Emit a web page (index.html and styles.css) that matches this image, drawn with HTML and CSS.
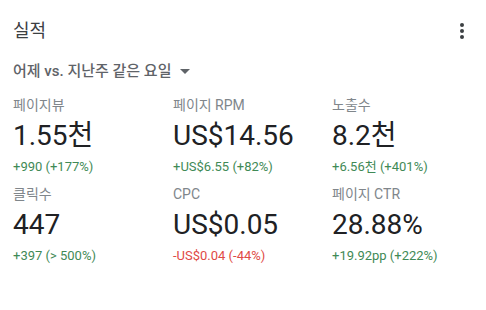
FILE: index.html
```html
<!DOCTYPE html>
<html lang="ko">
<head>
<meta charset="utf-8">
<link rel="stylesheet" href="styles.css">
</head>
<body>
<div class="card">
  <div class="header">
    <h1 class="title">실적</h1>
    <button class="more" aria-label="더보기">
      <svg width="4" height="16" viewBox="0 0 4 16"><circle cx="2" cy="2" r="2"/><circle cx="2" cy="8" r="2"/><circle cx="2" cy="14" r="2"/></svg>
    </button>
  </div>
  <div class="range">어제 vs. 지난주 같은 요일 <span class="caret"></span></div>
  <div class="grid">
    <div class="metric">
      <div class="label">페이지뷰</div>
      <div class="value">1.55천</div>
      <div class="delta up">+990 (+177%)</div>
    </div>
    <div class="metric">
      <div class="label">페이지 RPM</div>
      <div class="value">US$14.56</div>
      <div class="delta up">+US$6.55 (+82%)</div>
    </div>
    <div class="metric">
      <div class="label">노출수</div>
      <div class="value">8.2천</div>
      <div class="delta up">+6.56천 (+401%)</div>
    </div>
    <div class="metric">
      <div class="label">클릭수</div>
      <div class="value">447</div>
      <div class="delta up">+397 (&gt; 500%)</div>
    </div>
    <div class="metric">
      <div class="label">CPC</div>
      <div class="value">US$0.05</div>
      <div class="delta down">-US$0.04 (-44%)</div>
    </div>
    <div class="metric">
      <div class="label">페이지 CTR</div>
      <div class="value">28.88%</div>
      <div class="delta up">+19.92pp (+222%)</div>
    </div>
  </div>
</div>
</body>
</html>
```

FILE: styles.css
```css
html, body {
  margin: 0;
  padding: 0;
  background: #ffffff;
}
body {
  font-family: Roboto, "Noto Sans CJK KR", sans-serif;
  color: #202124;
}
.card {
  padding: 18px 13px 0 13px;
}
.header {
  display: flex;
  justify-content: space-between;
  align-items: center;
  height: 26px;
}
.title {
  margin: 0;
  font-size: 18px;
  font-weight: 400;
  color: #3c4043;
  line-height: 26px;
}
.more {
  border: 0;
  background: none;
  padding: 0;
  margin-right: 9px;
  display: flex;
  fill: #3c4043;
}
.range {
  margin-top: 17px;
  font-size: 15px;
  font-weight: 500;
  color: #5f6368;
  line-height: 20px;
  display: flex;
  align-items: center;
}
.caret {
  display: inline-block;
  width: 0;
  height: 0;
  margin-left: 9px;
  border-left: 5px solid transparent;
  border-right: 5px solid transparent;
  border-top: 5px solid #5f6368;
}
.grid {
  margin-top: 14px;
  display: grid;
  grid-template-columns: 160px 159px 160px;
  row-gap: 8px;
}
.metric {
  display: flex;
  flex-direction: column;
}
.label {
  font-size: 14px;
  line-height: 20px;
  color: #80868b;
}
.value {
  font-size: 28px;
  line-height: 36px;
  color: #202124;
  margin-top: 3px;
}
.delta {
  font-size: 13px;
  line-height: 18px;
  margin-top: 4px;
}
.up { color: #3f8a56; }
.down { color: #e04a45; }
```
